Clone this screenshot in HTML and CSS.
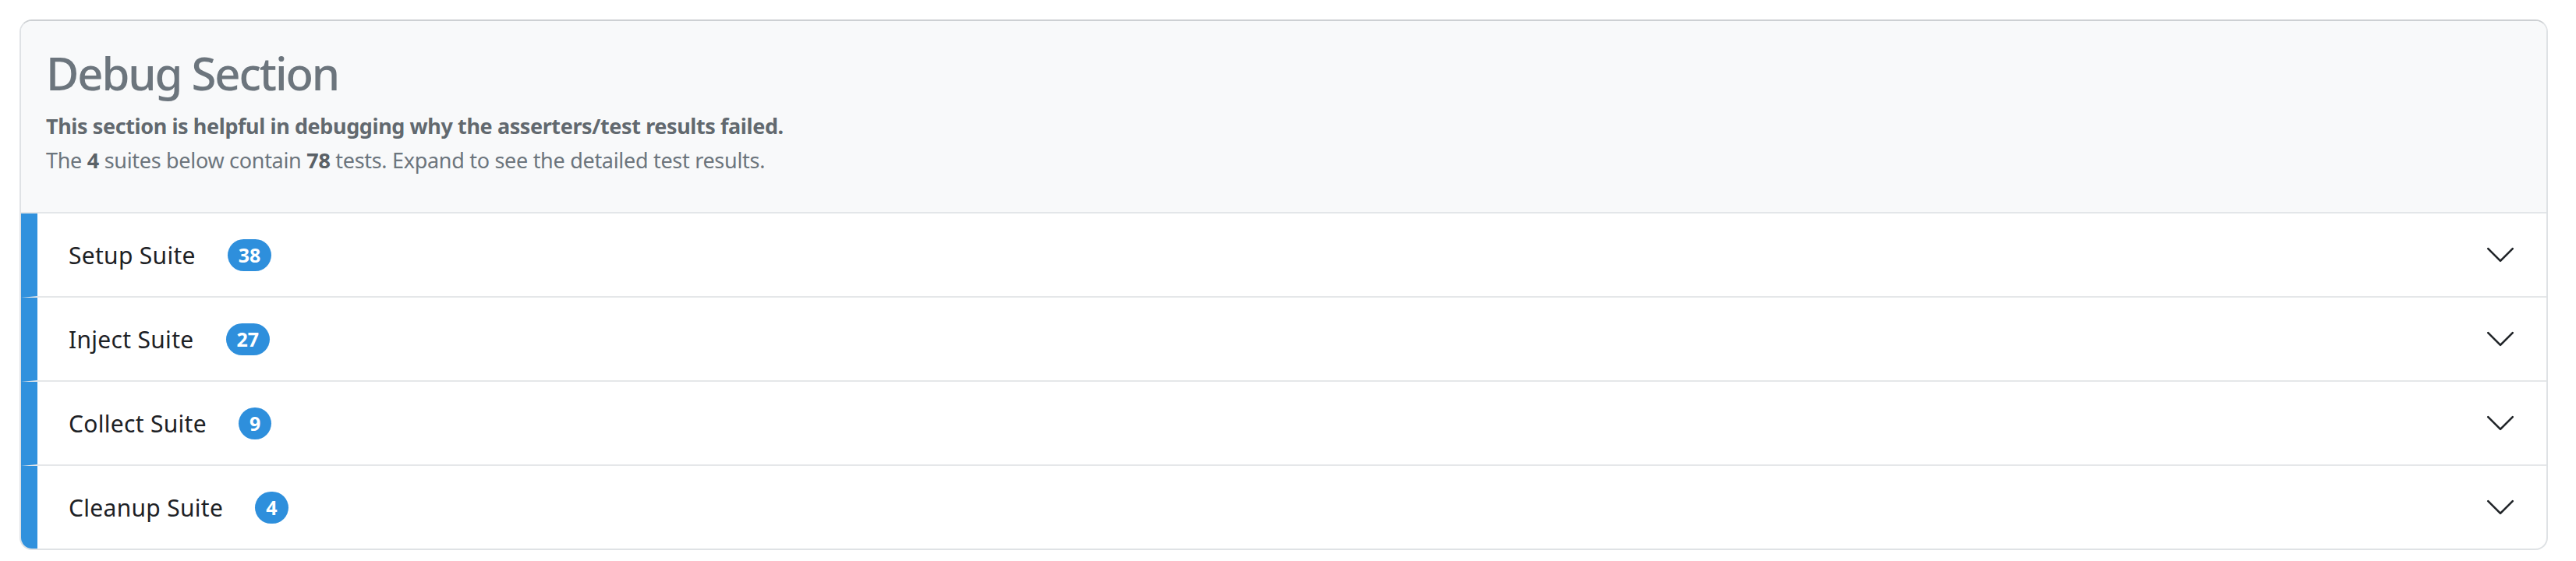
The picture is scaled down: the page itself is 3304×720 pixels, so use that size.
FILE: index.html
```html
<!DOCTYPE html>
<html lang="en">
<head>
<meta charset="utf-8">
<title>Debug Section</title>
<link rel="stylesheet" href="styles.css">
</head>
<body>
<section class="card">
  <header class="card-header">
    <h3 class="title">Debug Section</h3>
    <p class="lead-bold">This section is helpful in debugging why the asserters/test results failed.</p>
    <p class="summary">The <b>4</b> suites below contain <b>78</b> tests. Expand to see the detailed test results.</p>
  </header>
  <div class="suites">
    <div class="suite">
      <span class="suite-name">Setup Suite</span>
      <span class="badge">38</span>
      <svg class="chevron" viewBox="0 0 16 16"><path d="M1.646 4.646a.5.5 0 0 1 .708 0L8 10.293l5.646-5.647a.5.5 0 0 1 .708.708l-6 6a.5.5 0 0 1-.708 0l-6-6a.5.5 0 0 1 0-.708z"/></svg>
    </div>
    <div class="suite">
      <span class="suite-name">Inject Suite</span>
      <span class="badge">27</span>
      <svg class="chevron" viewBox="0 0 16 16"><path d="M1.646 4.646a.5.5 0 0 1 .708 0L8 10.293l5.646-5.647a.5.5 0 0 1 .708.708l-6 6a.5.5 0 0 1-.708 0l-6-6a.5.5 0 0 1 0-.708z"/></svg>
    </div>
    <div class="suite">
      <span class="suite-name">Collect Suite</span>
      <span class="badge">9</span>
      <svg class="chevron" viewBox="0 0 16 16"><path d="M1.646 4.646a.5.5 0 0 1 .708 0L8 10.293l5.646-5.647a.5.5 0 0 1 .708.708l-6 6a.5.5 0 0 1-.708 0l-6-6a.5.5 0 0 1 0-.708z"/></svg>
    </div>
    <div class="suite">
      <span class="suite-name">Cleanup Suite</span>
      <span class="badge">4</span>
      <svg class="chevron" viewBox="0 0 16 16"><path d="M1.646 4.646a.5.5 0 0 1 .708 0L8 10.293l5.646-5.647a.5.5 0 0 1 .708.708l-6 6a.5.5 0 0 1-.708 0l-6-6a.5.5 0 0 1 0-.708z"/></svg>
    </div>
  </div>
</section>
</body>
</html>
```

FILE: styles.css
```css
html, body {
  margin: 0;
  padding: 0;
  background: #ffffff;
}

body {
  font-family: "Noto Sans", "Open Sans", sans-serif;
  color: #212529;
}

.card {
  margin: 25px 36px 0 25px;
  border: 2px solid #dfe2e5;
  border-top-color: #cdd0d3;
  border-radius: 16px;
  overflow: hidden;
  background: #ffffff;
}

.card-header {
  background: #f8f9fa;
  padding: 31px 32px 44px;
  border-bottom: 2px solid #e3e6e9;
}

.title {
  margin: 0 0 11px;
  font-size: 58px;
  line-height: 71px;
  font-weight: 500;
  color: #6c757d;
  letter-spacing: -2.1px;
}

.lead-bold,
.summary {
  margin: 0;
  font-size: 27px;
  line-height: 44px;
  color: #6c757d;
}

.lead-bold {
  font-weight: 700;
  color: #62696f;
  letter-spacing: -0.4px;
}

.summary {
  letter-spacing: -0.3px;
}

.summary b {
  font-weight: 700;
  color: #5a6167;
}

.suites {
  display: flex;
  flex-direction: column;
}

.suite {
  display: flex;
  align-items: center;
  height: 106px;
  border-left: 21px solid #3091dd;
  border-bottom: 2px solid #e5e7e9;
  padding: 0 38px 0 40px;
}

.suite:last-child {
  border-bottom: none;
}

.suite-name {
  font-size: 30px;
  color: #1d2125;
  letter-spacing: 0.3px;
}

.badge {
  margin-left: 41px;
  display: inline-flex;
  align-items: center;
  justify-content: center;
  min-width: 41px;
  height: 41px;
  box-sizing: border-box;
  padding: 0 14px;
  border-radius: 21px;
  background: #2e8fdc;
  color: #ffffff;
  font-size: 25px;
  font-weight: 700;
}

.chevron {
  margin-left: auto;
  width: 42px;
  height: 42px;
  fill: #212529;
}
```
